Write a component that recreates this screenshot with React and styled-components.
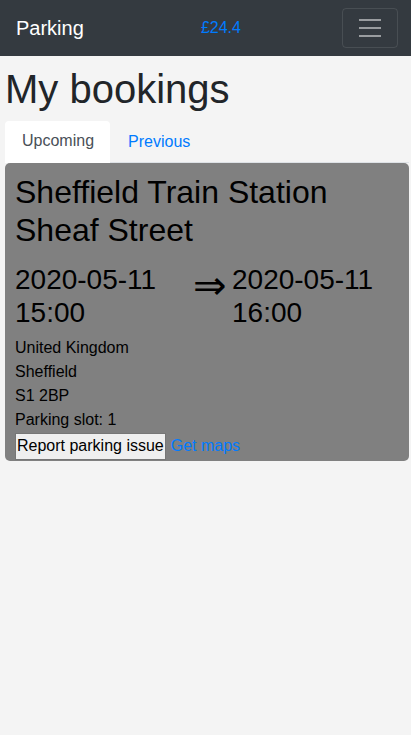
import React, { useState } from 'react'
import styled, { createGlobalStyle } from 'styled-components'

const GlobalStyle = createGlobalStyle`
  html, body {
    margin: 0;
    padding: 0;
  }
  body {
    background-color: #f4f4f4;
    font-family: "Liberation Sans", Arial, sans-serif;
    font-size: 16px;
    line-height: 1.5;
    color: #212529;
  }
  * {
    box-sizing: border-box;
  }
`

const bookings = [
  {
    id: 1,
    title: 'Sheffield Train Station Sheaf Street',
    start: '2020-05-11 15:00',
    end: '2020-05-11 16:00',
    country: 'United Kingdom',
    city: 'Sheffield',
    postcode: 'S1 2BP',
    slot: 1,
  },
]

function App() {
  const [tab, setTab] = useState('upcoming')

  return (
    <div>
      <GlobalStyle />
      <Navbar>
        <Brand href="#">Parking</Brand>
        <Balance>£24.4</Balance>
        <Toggler aria-label="Toggle navigation">
          <svg width="30" height="30" viewBox="0 0 30 30">
            <path
              d="M4 7h22M4 15h22M4 23h22"
              stroke="rgba(255,255,255,0.5)"
              strokeWidth="2"
              strokeMiterlimit="10"
            />
          </svg>
        </Toggler>
      </Navbar>

      <Main>
        <Title>My bookings</Title>
        <Tabs>
          <Tab active={tab === 'upcoming'} onClick={() => setTab('upcoming')}>Upcoming</Tab>
          <Tab active={tab === 'previous'} onClick={() => setTab('previous')}>Previous</Tab>
        </Tabs>

        {tab === 'upcoming' && bookings.map(b => (
          <Card key={b.id}>
            <CardTitle>{b.title}</CardTitle>
            <DateRow>
              <DateText>{b.start}</DateText>
              <Arrow>⇒</Arrow>
              <DateText>{b.end}</DateText>
            </DateRow>
            <Address>
              <Line>{b.country}</Line>
              <Line>{b.city}</Line>
              <Line>{b.postcode}</Line>
              <Line>Parking slot: {b.slot}</Line>
            </Address>
            <Actions>
              <ReportButton>Report parking issue</ReportButton>
              <MapsLink href="#">Get maps</MapsLink>
            </Actions>
          </Card>
        ))}
      </Main>
    </div>
  )
}

const Navbar = styled.nav`
  display: flex;
  align-items: center;
  justify-content: space-between;
  height: 56px;
  padding: 8px 13px 8px 16px;
  background-color: #343a40;
`

const Brand = styled.a`
  font-size: 20px;
  line-height: 30px;
  color: #fff;
  text-decoration: none;
  margin-right: 16px;
`

const Balance = styled.span`
  font-size: 16px;
  color: #007bff;
`

const Toggler = styled.button`
  display: flex;
  align-items: center;
  justify-content: center;
  width: 56px;
  height: 40px;
  padding: 4px 12px;
  background: transparent;
  border: 1px solid rgba(255, 255, 255, 0.1);
  border-radius: 4px;
`

const Main = styled.main`
  padding: 9px 2px 0 5px;
`

const Title = styled.h1`
  margin: 0 0 8px;
  font-size: 40px;
  font-weight: 500;
  line-height: 1.2;
  color: #212529;
`

const Tabs = styled.div`
  display: flex;
  border-bottom: 1px solid #dee2e6;
`

const Tab = styled.a`
  display: block;
  margin-bottom: -1px;
  padding: 8px 16px 8px 17px;
  font-size: 16px;
  line-height: 24px;
  cursor: pointer;
  text-decoration: none;
  border: 1px solid ${p => (p.active ? '#dee2e6 #dee2e6 #fff' : 'transparent')};
  border-top-left-radius: 4px;
  border-top-right-radius: 4px;
  background-color: ${p => (p.active ? '#fff' : 'transparent')};
  color: ${p => (p.active ? '#495057' : '#007bff')};
`

const Card = styled.div`
  background-color: #808080;
  border-radius: 5px;
  padding: 10px 10px 1px;
  color: #000;
`

const CardTitle = styled.h2`
  margin: 0 0 13px;
  font-size: 32px;
  font-weight: 500;
  line-height: 1.2;
`

const DateRow = styled.div`
  display: grid;
  grid-template-columns: 177px 40px 1fr;
  align-items: start;
`

const DateText = styled.h3`
  margin: 0;
  font-size: 28px;
  font-weight: 500;
  line-height: 1.2;
`

const Arrow = styled.span`
  font-family: "DejaVu Sans", sans-serif;
  font-size: 40px;
  line-height: 33.6px;
  padding-top: 6px;
  padding-left: 1px;
`

const Address = styled.div`
  margin-top: 6px;
`

const Line = styled.div`
  font-size: 16px;
  line-height: 24px;
`

const Actions = styled.div`
  display: flex;
  align-items: center;
  gap: 5px;
  margin-top: 1px;
`

const ReportButton = styled.button`
  height: 27px;
  padding: 0 1px;
  font-family: inherit;
  font-size: 16px;
  line-height: 24px;
  color: #000;
  background-color: #efefef;
  border: 1px solid #767676;
  border-radius: 0;
`

const MapsLink = styled.a`
  font-size: 16px;
  color: #007bff;
  text-decoration: none;
`

export default App
